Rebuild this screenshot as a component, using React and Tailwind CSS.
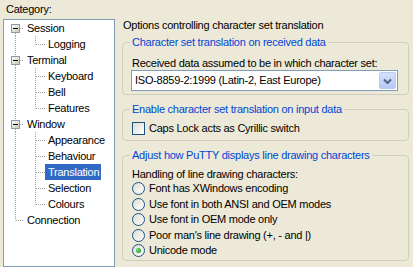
import React from "react";

const FONT = { fontFamily: '"Liberation Sans", Arial, sans-serif' };

const tree = [
    { label: "Session", children: ["Logging"] },
    { label: "Terminal", children: ["Keyboard", "Bell", "Features"] },
    { label: "Window", children: ["Appearance", "Behaviour", "Translation", "Selection", "Colours"] },
    { label: "Connection", children: [] },
];

/* ---------- tree connectors ---------- */
const RootGutter = ({ first, last, expandable }) => (
    <svg width="20" height="16" className="shrink-0">
        <g stroke="#a0a0a0" strokeDasharray="1 1" fill="none">
            {!first && <line x1="11.5" y1="0" x2="11.5" y2={expandable ? 4 : 8.5} />}
            {!last && <line x1="11.5" y1={expandable ? 13 : 8.5} x2="11.5" y2="16" />}
            <line x1={expandable ? 16 : 12} y1="8.5" x2="20" y2="8.5" />
        </g>
        {expandable && (
            <g>
                <defs>
                    <linearGradient id="tb" x1="0" y1="0" x2="1" y2="1">
                        <stop offset="0" stopColor="#ffffff" />
                        <stop offset="1" stopColor="#c8c3b4" />
                    </linearGradient>
                </defs>
                <rect x="7.5" y="4.5" width="8" height="8" fill="url(#tb)" stroke="#8a9cab" />
                <line x1="9" y1="8.5" x2="14" y2="8.5" stroke="#000" />
            </g>
        )}
    </svg>
);

const ChildGutter = ({ last }) => (
    <svg width="41" height="16" className="shrink-0">
        <g stroke="#a0a0a0" strokeDasharray="1 1" fill="none">
            <line x1="11.5" y1="0" x2="11.5" y2="16" />
            <line x1="31.5" y1="0" x2="31.5" y2={last ? 8.5 : 16} />
            <line x1="32" y1="8.5" x2="41" y2="8.5" />
        </g>
    </svg>
);

const TreeLabel = ({ text, selected }) => (
    <span
        className={
            "h-[16px] leading-[16px] pl-[3px] pr-[2px] whitespace-nowrap " +
            (selected ? "bg-[#316ac5] text-white" : "text-black")
        }
    >
        {text}
    </span>
);

/* ---------- XP controls ---------- */
const Checkbox = () => (
    <span className="w-[13px] h-[13px] shrink-0 border border-[#1c5180] bg-gradient-to-br from-[#dcdcd7] to-[#ffffff]" />
);

const Radio = ({ checked }) => (
    <svg width="13" height="13" className="shrink-0">
        <defs>
            <linearGradient id="rg" x1="0" y1="0" x2="1" y2="1">
                <stop offset="0" stopColor="#dcdcd7" />
                <stop offset="1" stopColor="#ffffff" />
            </linearGradient>
            <radialGradient id="dot" cx="0.4" cy="0.4" r="0.6">
                <stop offset="0" stopColor="#7fe07f" />
                <stop offset="1" stopColor="#21a121" />
            </radialGradient>
        </defs>
        <circle cx="6.5" cy="6.5" r="6" fill="url(#rg)" stroke="#1c5180" />
        {checked && <circle cx="6.5" cy="6.5" r="2.5" fill="url(#dot)" />}
    </svg>
);

const Group = ({ title, className = "", children }) => (
    <fieldset className={"border border-[#d0d0bf] rounded-[4px] " + className}>
        <legend className="ml-[7px] px-[2px] h-[13px] leading-[13px] text-[#0046d5] whitespace-nowrap">{title}</legend>
        {children}
    </fieldset>
);

const radios = [
    "Font has XWindows encoding",
    "Use font in both ANSI and OEM modes",
    "Use font in OEM mode only",
    "Poor man's line drawing (+, - and |)",
    "Unicode mode",
];

export default function App() {
    return (
        <div className="w-[413px] h-[267px] overflow-hidden bg-[#ece9d8] flex text-[11px] tracking-[-0.25px] text-black" style={FONT}>
            {/* Category tree */}
            <div className="ml-[3px] w-[112px] shrink-0 flex flex-col">
                <div className="pt-[3px] pl-[3px] h-[16px] leading-[13px]">Category:</div>
                <div className="mt-[3px] h-[260px] border border-[#7f9db9] bg-white flex flex-col">
                    {tree.map((node, i) => (
                        <React.Fragment key={node.label}>
                            <div className="flex h-[16px] items-center">
                                <RootGutter
                                    first={i === 0}
                                    last={i === tree.length - 1}
                                    expandable={node.children.length > 0}
                                />
                                <TreeLabel text={node.label} />
                            </div>
                            {node.children.map((c, j) => (
                                <div key={c} className="flex h-[16px] items-center">
                                    <ChildGutter last={j === node.children.length - 1} />
                                    <TreeLabel text={c} selected={c === "Translation"} />
                                </div>
                            ))}
                        </React.Fragment>
                    ))}
                </div>
            </div>

            {/* Options panel */}
            <div className="ml-[7px] w-[287px] shrink-0 flex flex-col">
                <div className="mt-[19px] pl-[1px] h-[13px] leading-[13px] whitespace-nowrap">
                    Options controlling character set translation
                </div>

                <Group title="Character set translation on received data" className="mt-[4px] pb-[3px]">
                    <div className="pl-[8px] pr-[10px]">
                        <div className="mt-[8px] pl-[1px] h-[12px] leading-[12px] whitespace-nowrap">
                            Received data assumed to be in which character set:
                        </div>
                        <div className="mt-[1px] h-[21px] border border-[#7f9db9] bg-white flex items-center pl-[3px] pr-[1px]">
                            <span className="flex-1 whitespace-nowrap">ISO-8859-2:1999 (Latin-2, East Europe)</span>
                            <span className="w-[17px] h-[17px] rounded-[2px] border border-[#b9cbf3] bg-gradient-to-b from-[#d5e1fc] to-[#b4c8f6] flex items-center justify-center">
                                <svg width="9" height="6" viewBox="0 0 9 6">
                                    <path d="M1 1.5 L4.5 5 L8 1.5" fill="none" stroke="#4d6185" strokeWidth="2" />
                                </svg>
                            </span>
                        </div>
                    </div>
                </Group>

                <Group title="Enable character set translation on input data" className="mt-[8px] pb-[5px]">
                    <div className="mt-[6px] pl-[9px] flex items-center gap-[4px] h-[13px]">
                        <Checkbox />
                        <span className="leading-[13px] whitespace-nowrap">Caps Lock acts as Cyrillic switch</span>
                    </div>
                </Group>

                <Group title="Adjust how PuTTY displays line drawing characters" className="mt-[8px] pb-[1px]">
                    <div className="pl-[9px]">
                        <div className="mt-[6px] h-[13px] leading-[13px] whitespace-nowrap">
                            Handling of line drawing characters:
                        </div>
                        {radios.map((r, i) => (
                            <div key={r} className="flex items-center gap-[4px] h-[15.5px]">
                                <Radio checked={i === radios.length - 1} />
                                <span className="leading-[15.5px] whitespace-nowrap">{r}</span>
                            </div>
                        ))}
                    </div>
                </Group>
            </div>
        </div>
    );
}
